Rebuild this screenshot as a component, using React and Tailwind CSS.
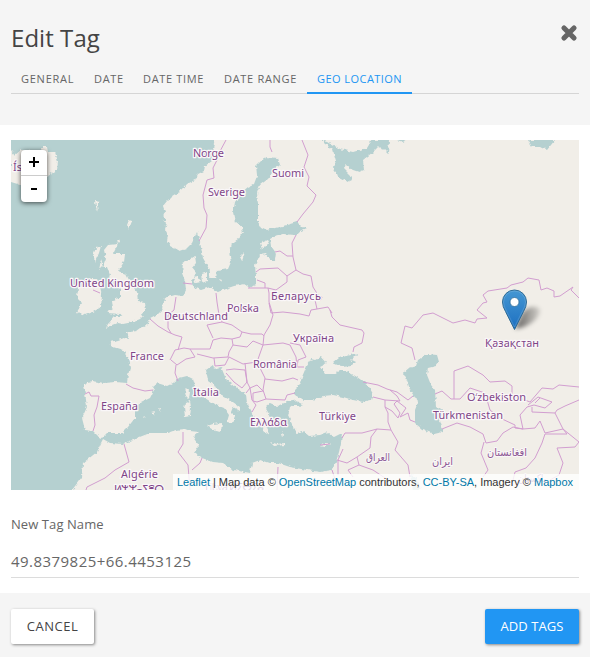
import React from "react";

const LAND = [
  // Scandinavia, Europe, Asia and North Africa
  "M215 140L213 148L215 153L211 157L212 161L205 166L204 171L198 174L195 180L187 184L183 189L177 193L172 196L167 201L163 206L165 212L163 217L167 223L165 229L168 235L167 241L171 246L180 251L186 249L192 243L197 232L200 242L203 258L207 265L210 271L209 278L216 278L217 271L228 269L231 262L229 252L231 244L238 239L243 232L242 227L235 222L233 213L235 202L241 193L248 187L254 184L257 176L256 166L262 160L268 157L278 158L280 165L272 172L268 179L260 185L257 193L258 204L258 222L261 227L267 230L283 226L297 222L301 226L307 229L300 232L295 235L283 234L275 236L270 239L271 246L276 253L275 260L270 260L266 254L260 255L255 265L256 276L256 284L250 288L244 284L234 286L225 289L218 292L210 287L201 290L194 287L192 280L196 273L192 268L196 263L195 256L189 260L183 263L182 273L185 281L186 290L183 296L175 295L168 297L163 301L162 310L156 316L150 319L147 325L141 328L137 331L130 332L127 332L129 339L124 338L118 340L110 342L113 347L123 350L128 359L130 368L128 375L127 383L115 382L104 383L93 381L87 382L83 386L85 393L87 407L82 418L85 430L93 431L98 436L102 438L107 433L122 433L128 427L135 418L135 409L142 402L150 398L154 390L152 387L157 383L167 386L173 383L179 378L187 376L193 379L196 389L205 398L214 404L224 408L229 415L227 422L232 423L235 416L231 412L233 407L240 411L240 407L230 400L219 394L215 386L208 380L206 370L213 365L214 369L221 367L226 379L237 388L246 394L247 403L252 412L256 421L263 426L264 434L269 433L266 426L272 423L268 413L266 406L270 403L277 406L287 402L299 400L290 407L288 416L293 426L297 433L303 431L309 436L320 435L328 432L334 437L342 433L341 443L339 452L336 462L332 470L320 472L307 470L290 467L278 463L269 463L260 460L252 463L250 473L240 471L233 470L223 463L213 462L202 458L194 453L199 446L193 437L199 432L190 431L185 429L176 430L167 433L150 433L137 438L123 444L110 443L103 439L101 443L97 452L83 463L82 477L72 490L72 500L595 500L595 130L215 130Z",
  // Iceland
  "M11 150L15 155L21 150L31 151L43 153L42 147L47 147L48 152L55 152L58 162L57 170L47 176L35 180L21 185L11 182Z",
  // Great Britain
  "M104 250L108 245L118 244L113 254L125 254L124 262L118 271L126 274L130 282L137 292L138 302L145 303L146 310L142 314L143 316L140 319L133 322L123 324L118 323L113 325L106 328L108 324L114 317L122 317L120 314L108 313L107 312L113 308L112 300L120 298L120 290L117 282L108 283L110 275L107 267L103 267L106 259Z",
  // Ireland
  "M89 279L96 279L100 287L102 295L101 307L93 312L85 315L77 312L82 303L77 298L78 288L85 287Z",
  // Hebrides, Faroe, Shetland, Orkney
  "M96 248L101 246L99 253L95 262L93 255ZM101 260L103 266L99 270ZM95 201L100 202L97 205L98 213L96 207ZM129 220L132 221L129 229L127 225ZM117 239L120 240L118 243Z",
  // Danish and Baltic islands
  "M193 277L198 276L201 282L196 283ZM201 274L207 272L207 281L202 283ZM219 279L222 280L221 282ZM240 257L245 252L242 261ZM260 243L267 240L269 244L262 249Z",
  // Mediterranean islands
  "M188 388L190 392L189 399L186 396L185 391ZM185 403L190 401L191 407L190 416L185 417L184 408ZM207 426L213 424L222 423L221 432L215 431ZM270 442L277 444L285 443L285 445L274 446ZM320 446L325 443L331 443L325 447ZM151 412L155 411L154 415ZM143 417L145 416L144 418ZM158 409L161 409L160 411ZM281 431L284 436L283 437Z",
];

const WATER = [
  // White Sea and Arctic inlets
  "M320 140L328 142L340 149L353 152L367 148L372 140L389 140L388 153L384 149L378 147L373 152L363 160L364 170L359 172L353 170L346 164L344 169L350 175L352 180L348 182L339 177L333 168L336 161L333 150Z",
  "M397 140L406 140L403 142ZM528 140L532 147L541 147L547 150L555 140Z",
  // Black Sea and Azov
  "M302 377L307 365L311 359L315 360L321 357L326 363L320 366L326 374L334 374L340 370L345 370L357 377L368 385L373 394L371 400L363 402L353 400L343 397L333 395L323 396L313 400L303 400L295 395L295 389L300 384Z",
  "M333 363L339 358L346 356L358 353L351 360L355 362L351 366L342 367Z",
  "M290 403L297 401L303 404L299 406L292 406Z",
  // Caspian Sea
  "M403 373L409 368L416 366L418 360L427 354L437 355L439 362L436 366L428 368L427 375L431 385L435 390L436 407L443 411L439 420L443 432L434 434L423 430L415 423L415 410L418 402L410 390L407 380Z",
  "M410 475L417 477L421 490L413 490Z",
];

const BORDERS = [
  "M226 140L218 155L217 160L213 168L214 178L207 180L203 195L204 208L207 215L206 228L199 241",
  "M270 140L270 147L272 152",
  "M302 140L308 155L304 167L309 177L307 186L316 195L313 202L303 214L297 222",
  "M296 235L292 243L293 257L296 270L287 276L278 268L260 269L256 272",
  "M275 252L280 251L287 256L293 256",
  "M287 276L287 282L276 290L268 288L248 288M257 280L265 283L265 288",
  "M268 288L269 293L269 302L273 315L270 325L264 335L263 345",
  "M296 270L303 274L311 276L313 287L318 295L322 297L321 300L315 300L317 309L328 307L332 313",
  "M269 303L271 313L283 312L300 314L309 316L311 310L317 309",
  "M330 310L332 317L340 325L362 330L364 333L362 343L354 347L353 352",
  "M263 345L283 343L290 345L296 357L297 367L304 367M290 343L300 345L306 357L298 360L297 367",
  "M216 293L217 302L219 315L222 322L207 325L213 338",
  "M222 322L232 325L242 332L240 337L232 339L221 338L213 340L210 349L195 349L190 349",
  "M242 332L251 334L262 334L264 336M233 345L247 347L253 341L263 345L257 362",
  "M232 339L233 345L229 352L228 357L213 358L205 356L197 354",
  "M170 360L175 350L184 348L190 349L195 357L186 359L177 365L171 360M176 365L175 373L178 381",
  "M150 319L158 326L168 332L175 335L182 337L178 350M176 297L174 310L168 315L168 328L171 333",
  "M183 283L192 284M93 290L100 293",
  "M126 384L133 388L145 391L153 390M85 394L89 392L91 396L99 396L97 407L94 415L95 425L93 431",
  "M124 444L129 462L115 470L105 478L87 487L86 490",
  "M183 432L183 444L178 452L188 465L190 490M202 458L200 463L192 470M278 467L277 490",
  "M214 358L215 366L225 365L229 357L243 364L257 362L265 378L263 390L266 399L257 402L253 401L253 393L263 391",
  "M226 370L234 369L245 370L247 382L242 388L234 382L226 373M245 363L247 382L250 388L246 393M250 388L257 385L263 391M250 388L252 400L256 405L252 412",
  "M265 379L282 381L293 378L298 380M266 399L285 400L287 395L295 393",
  "M363 382L378 385L387 389L397 392L408 400L413 396M373 397L385 400L400 401L397 396L390 390",
  "M385 400L385 407L392 411L398 418L400 413L394 404L397 401L406 408L400 417L408 413L410 420L415 422",
  "M385 407L388 413L388 422L391 430L398 442L395 450L408 465L410 477M391 430L377 429L362 433L345 433L342 438",
  "M377 429L371 437L370 448L357 457L347 463L337 460M357 457L359 465L348 470L353 477M359 465L373 470L388 480M343 449L338 460L338 475M332 470L337 485",
  "M320 445L330 444",
  "M415 360L412 348L401 343L405 326L412 328L423 315L433 313L453 323L465 320L475 323L477 319L487 318L477 310L483 303L487 302L483 295L488 291L507 288L511 285L523 282L528 278L539 280L541 290L547 288L554 291L554 297L560 296L573 287L571 290L579 298",
  "M454 399L454 371L468 366L483 375L490 382L505 381L512 386L512 395L530 402L536 395L542 388L553 389L559 385L579 387",
  "M435 394L442 391L451 399L460 399L470 388L485 393L490 410L500 418L515 425L515 428L523 429L520 415L527 407L534 405L545 408L552 402L538 397L528 405",
  "M442 429L457 423L470 427L483 434L486 443L497 441L503 433L513 427L523 429L535 428L540 421L545 433L563 429L555 413L532 412L532 407M540 398L535 403",
  "M555 413L557 410L565 406L579 400M563 429L579 442L575 447L557 448L563 463L559 475L550 480M563 429L567 434L545 434L542 443L535 458L526 468L515 472L513 480M484 442L481 453L488 470L483 477",
];

// text, left edge, baseline, drawn width
const LABELS = [
  ["Norge", 193, 157, 31], ["Sverige", 208, 196, 37], ["Suomi", 272, 177, 32],
  ["United Kingdom", 70, 287, 84], ["Deutschland", 164, 320, 64], ["Polska", 227, 312, 32],
  ["Беларусь", 271, 300, 50], ["Україна", 293, 342, 41], ["France", 130, 360, 34],
  ["România", 253, 368, 44], ["España", 101, 410, 37], ["Italia", 193, 396, 26],
  ["Ελλάδα", 250, 426, 37], ["Türkiye", 319, 420, 37], ["Қазақстан", 485, 347, 54],
  ["Oʻzbekiston", 467, 401, 59], ["Türkmenistan", 433, 419, 70], ["Algérie", 121, 478, 37],
  ["Ís", 13, 171, 9],
];
const ARABIC_LABELS = [
  ["العراق", 366, 461, 24], ["ایران", 432, 465, 21], ["افغانستان", 487, 456, 40], ["پاکستان", 518, 482, 28],
];

function MapCanvas() {
  return (
    <svg className="block h-[350px] w-[568px]" viewBox="11 140 568 350">
      <defs>
        <filter id="coast" x="0" y="0" width="1" height="1" colorInterpolationFilters="sRGB">
          <feTurbulence type="fractalNoise" baseFrequency="0.25" numOctaves="2" seed="4" />
          <feDisplacementMap in="SourceGraphic" scale="4" xChannelSelector="R" yChannelSelector="G" />
        </filter>
        <filter id="soft" x="-50%" y="-50%" width="200%" height="200%"><feGaussianBlur stdDeviation="2" /></filter>
        <linearGradient id="pin" x1="0" y1="0" x2="0" y2="1">
          <stop offset="0" stopColor="#4597d3" /><stop offset="1" stopColor="#1c6fc0" />
        </linearGradient>
        <linearGradient id="shade" x1="0" y1="0" x2="1" y2="0">
          <stop offset="0" stopColor="#000" stopOpacity=".6" /><stop offset="1" stopColor="#000" stopOpacity=".12" />
        </linearGradient>
      </defs>
      <rect x="11" y="140" width="568" height="350" fill="#f1eee8" />
      <g filter="url(#coast)">
        <rect x="0" y="130" width="590" height="370" fill="#b5d0d0" />
        {LAND.map((d) => <path key={d} d={d} fill="#f1eee8" />)}
        {WATER.map((d) => <path key={d} d={d} fill="#b5d0d0" />)}
      </g>
      <g fill="none" stroke="#d29ed0" strokeWidth="1" strokeLinejoin="round">
        {BORDERS.map((d) => <path key={d} d={d} />)}
      </g>
      <g className="font-['Noto_Sans','DejaVu_Sans',sans-serif]" fill="#7f4588" stroke="#faf7f8" strokeWidth="2.6" strokeLinejoin="round" paintOrder="stroke">
        {LABELS.map(([t, x, y, w]) => (
          <text key={t} x={x} y={y} fontSize="11" textLength={w} lengthAdjust="spacing">{t}</text>
        ))}
        <text x="114" y="493" fontSize="11" textLength="50">ⵍⵣⵣⴰⵢⴻⵔ</text>
        <text x="205" y="491" fontSize="11" textLength="59">Libya ⵍⵉⴱⵢⴰ</text>
      </g>
      <g className="font-['DejaVu_Sans',sans-serif]" fill="#8d5995" stroke="#faf7f8" strokeWidth="2" strokeLinejoin="round" paintOrder="stroke">
        {ARABIC_LABELS.map(([t, x, y, w]) => (
          <text key={t} x={x} y={y} fontSize="11" textLength={w} lengthAdjust="spacingAndGlyphs">{t}</text>
        ))}
      </g>
      <path d="M515 329L522 313Q531 303 540 309Q541 319 524 327Z" fill="url(#shade)" filter="url(#soft)" />
      <path d="M514.500 329.500L505.500 311.500Q502.500 306.500 502.500 302A12 12 0 0 1 526.500 302Q526.500 306.500 523.500 311.500Z" fill="url(#pin)" stroke="#2e6c97" />
      <path d="M514.500 327L506.500 311Q503.500 306 503.500 302A11 11 0 0 1 525.500 302Q525.500 306 522.500 311Z" fill="none" stroke="#fff" opacity=".15" />
      <circle cx="514.500" cy="302" r="4.500" fill="#fff" stroke="#2e6c97" strokeWidth=".8" />
    </svg>
  );
}

const TABS = [
  ["GENERAL", "w-[73px] tracking-[0.75px]"],
  ["DATE", "w-[49px] tracking-[0.7px]"],
  ["DATE TIME", "w-[81px] tracking-[0.65px]"],
  ["DATE RANGE", "w-[93px] tracking-[0.7px]"],
  ["GEO LOCATION", "w-[105px] tracking-[0.45px]"],
];

export default function App() {
  return (
    <div className="flex h-[657px] w-[590px] flex-col overflow-hidden bg-white font-['Open_Sans','Noto_Sans',sans-serif] text-[#666]">
      <header className="h-[125px] bg-[#f5f5f5] px-[11px] pt-[20px]">
        <div className="flex h-[44px] items-start justify-between">
          <h1 className="text-[24px] leading-[36px] tracking-[0.05px] text-[#444]">Edit Tag</h1>
          <button aria-label="Close" className="mt-[4px] mr-px">
            <svg className="block size-[18px]" viewBox="0 0 18 18"><path d="M4 4L14 14M14 4L4 14" stroke="#666" strokeWidth="5.200" strokeLinecap="round" /></svg>
          </button>
        </div>
        <nav className="flex h-[30px] border-b border-[#d5d5d5]">
          {TABS.map(([name, size], i) => (
            <button key={name} className={`flex h-[30px] shrink-0 justify-start whitespace-nowrap pl-[10px] text-[11px] leading-[29px] ${size} ${i === 4 ? "border-b-2 border-[#2196f3] text-[#2196f3]" : "text-[#666]"}`}>{name}</button>
          ))}
        </nav>
      </header>
      <main className="h-[468px] px-[11px] pt-[15px]">
        <div className="relative h-[350px] overflow-hidden">
          <MapCanvas />
          <div className="absolute left-[10px] top-[10px] flex w-[26px] flex-col rounded-[4px] bg-white shadow-[0_1px_5px_rgba(0,0,0,0.65)]">
            <button aria-label="Zoom in" className="flex h-[26px] items-center justify-center border-b border-[#ccc] pb-px"><svg className="size-[10px]" viewBox="0 0 10 10"><path d="M0 5H10M5 0V10" stroke="#000" strokeWidth="2" /></svg></button>
            <button aria-label="Zoom out" className="flex h-[26px] items-center justify-center"><span className="h-[2px] w-[6px] bg-black" /></button>
          </div>
          <div className="absolute bottom-0 right-0 h-[16px] w-[406px] whitespace-nowrap bg-white/80 pl-[4px] font-['Liberation_Sans',sans-serif] text-[11px] leading-[16px] tracking-[-0.015px] text-[#333]">
            <span className="text-[#0078a8]">Leaflet</span> | Map data © <span className="text-[#0078a8]">OpenStreetMap</span> contributors, <span className="text-[#0078a8]">CC-BY-SA</span>, Imagery © <span className="text-[#0078a8]">Mapbox</span>
          </div>
        </div>
        <label className="mt-[24px] block text-[13px] leading-[20px] tracking-[0.08px]">New Tag Name</label>
        <div className="mt-[12px] h-[32px] border-b border-[#dcdcdc] text-[15px] leading-[30px] tracking-[0.46px]">49.8379825+66.4453125</div>
      </main>
      <footer className="flex h-[64px] items-start justify-between bg-[#f5f5f5] px-[11px] pt-[16px]">
        <button className="h-[35px] w-[83px] rounded-[2px] bg-white pt-px text-[13px] tracking-[0.5px] text-[#444] shadow-[1px_1px_3px_rgba(0,0,0,0.45)]">CANCEL</button>
        <button className="h-[35px] w-[94px] rounded-[2px] bg-[#2196f3] pt-px text-[13px] tracking-[0.1px] text-white shadow-[1px_1px_3px_rgba(0,0,0,0.45)]">ADD TAGS</button>
      </footer>
    </div>
  );
}
